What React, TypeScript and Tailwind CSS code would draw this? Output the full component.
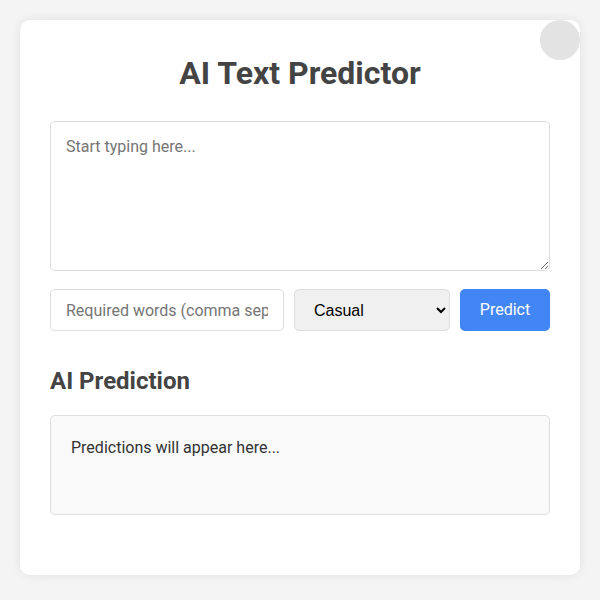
import { useState } from "react";

export default function App() {
  const [text, setText] = useState("");
  const [words, setWords] = useState("");
  const [tone, setTone] = useState("casual");

  return (
    <div className="min-h-[600px] bg-[#f4f4f4] p-[20px] font-['Roboto',sans-serif]">
      <div className="relative overflow-hidden rounded-[10px] bg-white px-[30px] pt-[34px] pb-[60px] shadow-[0_0_12px_rgba(0,0,0,0.08)]">
        {/* theme toggle */}
        <button className="absolute top-0 right-0 h-[40px] w-[40px] rounded-full bg-[#e3e3e3]" />

        <h1 className="mb-[29px] text-center text-[32px] font-bold leading-[38px] text-[#444]">
          AI Text Predictor
        </h1>

        <textarea
          value={text}
          onChange={(e) => setText(e.target.value)}
          placeholder="Start typing here..."
          className="mb-[18px] block h-[150px] w-full rounded-[5px] border border-[#ddd] px-[15px] py-[15px] text-[16px] leading-[20px] text-[#333] placeholder:text-[#757575] outline-none"
        />

        <div className="flex gap-[10px]">
          <input
            value={words}
            onChange={(e) => setWords(e.target.value)}
            placeholder="Required words (comma separated)"
            className="h-[42px] w-[234px] min-w-0 rounded-[5px] border border-[#ddd] px-[15px] text-[16px] text-[#333] placeholder:text-[#757575] outline-none"
          />
          <select
            value={tone}
            onChange={(e) => setTone(e.target.value)}
            className="h-[42px] w-[156px] rounded-[5px] border border-[#ddd] bg-[#f0f0f0] pl-[15px] pr-[4px] font-['Liberation_Sans',sans-serif] text-[16px] text-black outline-none"
          >
            <option value="casual">Casual</option>
            <option value="formal">Formal</option>
            <option value="creative">Creative</option>
          </select>
          <button className="h-[42px] flex-1 rounded-[5px] bg-[#4285f4] text-[16px] text-white">
            Predict
          </button>
        </div>

        <h2 className="mt-[36px] mb-[19px] text-[24px] font-bold leading-[29px] text-[#444]">
          AI Prediction
        </h2>

        <div className="min-h-[100px] rounded-[5px] border border-[#ddd] bg-[#f9f9f9] p-[20px] text-[16px] leading-[24px] text-[#333]">
          Predictions will appear here...
        </div>
      </div>
    </div>
  );
}
